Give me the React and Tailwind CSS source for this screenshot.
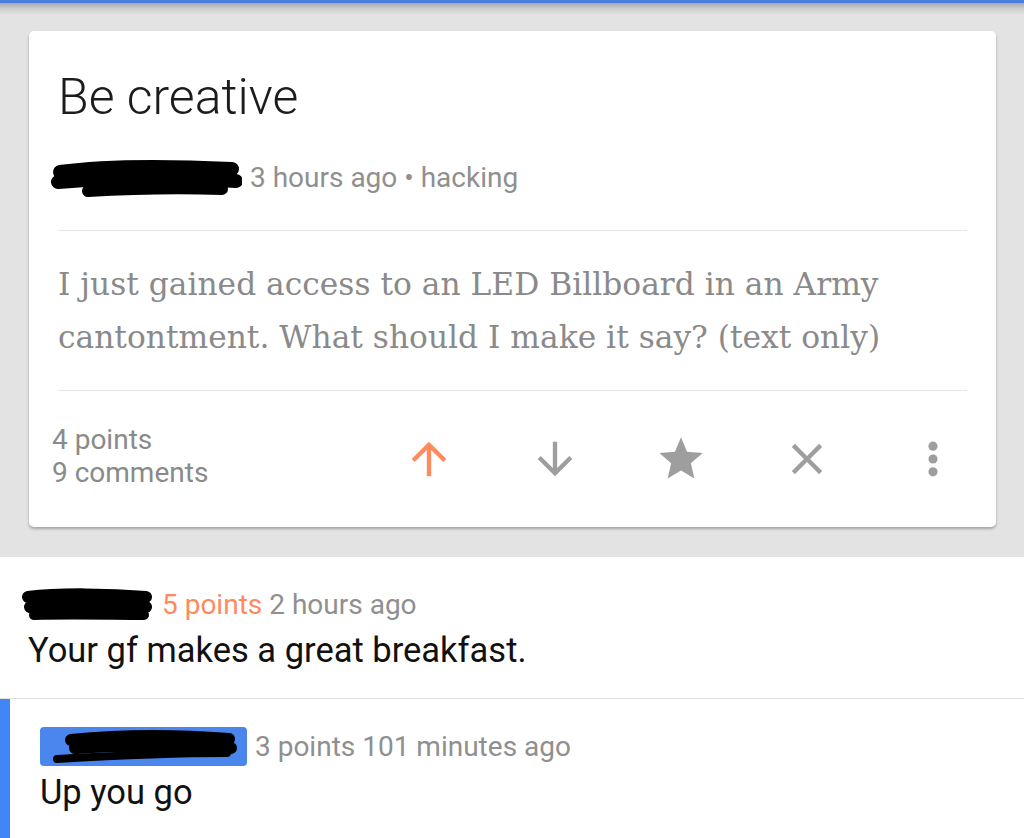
import React from "react";

const Icon = ({ d, color, size = 52 }) => (
  <svg width={size} height={size} viewBox="0 0 24 24" fill={color}>
    <path d={d} />
  </svg>
);

const Redacted = ({ w, h, strokes }) => (
  <svg width={w} height={h} viewBox={`0 0 ${w} ${h}`} className="shrink-0">
    <g stroke="#000" strokeLinecap="round" strokeLinejoin="round" fill="none">
      {strokes.map((s, i) => (
        <path key={i} d={s.d} strokeWidth={s.sw} />
      ))}
    </g>
  </svg>
);

const icons = [
  { d: "M4 12l1.41 1.41L11 7.83V20h2V7.83l5.58 5.59L20 12l-8-8-8 8z", color: "#ff8a5c" },
  { d: "M20 12l-1.41-1.41L13 16.17V4h-2v12.17l-5.58-5.59L4 12l8 8 8-8z", color: "#9e9e9e" },
  { d: "M12 17.27L18.18 21l-1.64-7.03L22 9.24l-7.19-.61L12 2 9.19 8.63 2 9.24l5.46 4.73L5.82 21z", color: "#9e9e9e" },
  { d: "M19 6.41L17.59 5 12 10.59 6.41 5 5 6.41 10.59 12 5 17.59 6.41 19 12 13.41 17.59 19 19 17.59 13.41 12z", color: "#9e9e9e" },
];

const App = () => {
  return (
    <div className="min-h-screen bg-[#e3e3e3] font-['Roboto','Noto_Sans',sans-serif]">
      <div className="h-[3px] bg-[#4a80dc]" />
      <div className="h-[12px] bg-[linear-gradient(to_bottom,#a8a8a8,#cdcdcd_45%,#e3e3e3)]" />

      <div className="pt-[16px] pb-[30px] pl-[29px] pr-[28px]">
        <div className="bg-white rounded-[5px] shadow-[0_2px_3px_rgba(0,0,0,0.28)] px-[29px] pt-[38px] pb-[38px]">
          <h1 className="text-[50px] leading-[56px] font-light text-[#1c1c1c]">Be creative</h1>

          <div className="mt-[31px] h-[44px] flex items-center ml-[-8px]">
            <Redacted
              w={192}
              h={46}
              strokes={[
                { d: "M10 17 C60 10 120 11 182 14", sw: 14 },
                { d: "M8 27 C70 22 130 22 186 26", sw: 14 },
                { d: "M38 36 C90 33 140 33 172 34", sw: 12 },
              ]}
            />
            <span className="ml-[8px] text-[28px] text-[#8f8f8f]">3 hours ago • hacking</span>
          </div>

          <div className="mt-[30px] h-px bg-[#e6e6e6]" />

          <p className="mt-[27px] text-[31.3px] leading-[53px] font-['DejaVu_Serif',serif] text-[#8a8a8a]">
            I just gained access to an LED Billboard in an Army cantontment. What should I make it say? (text only)
          </p>

          <div className="mt-[26px] h-px bg-[#e6e6e6]" />

          <div className="mt-[32px] flex items-center ml-[-6px] mr-[-29px]">
            <div className="text-[28px] leading-[33px] text-[#8a8a8a]">
              <div>4 points</div>
              <div>9 comments</div>
            </div>
            <div className="ml-auto pt-[6px] flex items-center">
              {icons.map((ic, i) => (
                <div key={i} className="w-[126px] flex justify-center">
                  <Icon d={ic.d} color={ic.color} />
                </div>
              ))}
              <div className="w-[126px] flex justify-center">
                <svg width="44" height="44" viewBox="0 0 24 24" fill="#9e9e9e">
                  <circle cx="12" cy="5" r="2.5" />
                  <circle cx="12" cy="12" r="2.5" />
                  <circle cx="12" cy="19" r="2.5" />
                </svg>
              </div>
            </div>
          </div>
        </div>
      </div>

      <div className="bg-white border-b border-[#e0e0e0] pl-[20px] pt-[28px] pb-[26px]">
        <div className="h-[40px] flex items-center">
          <Redacted
            w={132}
            h={40}
            strokes={[
              { d: "M8 12 C40 8 90 9 126 12", sw: 12 },
              { d: "M10 22 C50 18 95 18 126 22", sw: 12 },
              { d: "M14 30 C50 29 95 30 124 30", sw: 10 },
            ]}
          />
          <span className="ml-[10px] text-[28px] text-[#ff8a5c]">5 points</span>
          <span className="ml-[7px] text-[28px] text-[#8f8f8f]">2 hours ago</span>
        </div>
        <p className="mt-[3px] pl-[8px] text-[34.5px] leading-[44px] text-[#111]">Your gf makes a great breakfast.</p>
      </div>

      <div className="bg-white flex">
        <div className="w-[10px] bg-[#4285f4] shrink-0" />
        <div className="pl-[30px] pt-[28px] pb-[30px]">
          <div className="h-[39px] flex items-center">
            <div className="w-[207px] h-[39px] rounded-[4px] bg-[#4a86ee] flex items-center justify-center">
              <Redacted
                w={190}
                h={36}
                strokes={[
                  { d: "M22 11 C70 6 130 6 180 10", sw: 12 },
                  { d: "M26 19 C80 16 140 16 182 19", sw: 12 },
                  { d: "M8 30 C60 27 120 24 178 24", sw: 8 },
                ]}
              />
            </div>
            <span className="ml-[8px] text-[28px] text-[#8f8f8f]">3 points 101 minutes ago</span>
          </div>
          <p className="mt-[4px] text-[34.5px] leading-[44px] text-[#111]">Up you go</p>
        </div>
      </div>
    </div>
  );
};

export default App;
